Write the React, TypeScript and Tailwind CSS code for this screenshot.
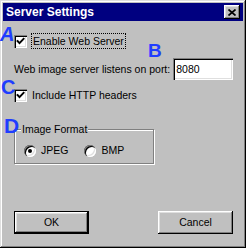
import React from 'react';

const raised = 'shadow-[inset_-1px_-1px_#000,inset_1px_1px_#fff,inset_-2px_-2px_#808080,inset_2px_2px_#dfdfdf]';
const sunken = 'shadow-[inset_1px_1px_#808080,inset_2px_2px_#000,inset_-1px_-1px_#fff,inset_-2px_-2px_#dfdfdf]';

function CheckBox({ checked }: { checked: boolean }) {
  return (
    <div className={`w-[13px] h-[13px] bg-white flex items-center justify-center shrink-0 ${sunken}`}>
      {checked && (
        <svg width="9" height="9" viewBox="0 0 9 9">
          <path d="M1.5 4 L3.5 6.2 L7.6 1.8" fill="none" stroke="#000" strokeWidth="1.9" strokeLinecap="square" />
        </svg>
      )}
    </div>
  );
}

function Radio({ checked, label }: { checked: boolean; label: string }) {
  return (
    <div className="flex items-center">
      <div className="w-[12px] h-[12px] rounded-full bg-white flex items-center justify-center shrink-0 shadow-[inset_1px_1px_#808080,inset_2px_2px_#000,inset_-1px_-1px_#fff,inset_-2px_-2px_#dfdfdf]">
        {checked && <div className="w-[4px] h-[4px] rounded-full bg-black" />}
      </div>
      <span className="ml-[5px]">{label}</span>
    </div>
  );
}

function Button({ label, isDefault }: { label: string; isDefault?: boolean }) {
  return (
    <button
      className={`w-[75px] h-[23px] bg-[#c0c0c0] flex items-center justify-center ${
        isDefault ? 'border border-black shadow-[inset_-1px_-1px_#000,inset_1px_1px_#fff,inset_-2px_-2px_#808080,inset_2px_2px_#dfdfdf]' : raised
      }`}
    >
      {label}
    </button>
  );
}

export default function App() {
  return (
    <div
      className="relative w-[246px] h-[248px] bg-[#c0c0c0] p-[3px] flex flex-col text-black text-[10.5px] leading-[13px] font-['Liberation_Sans',Arial,sans-serif] shadow-[inset_-1px_-1px_#000,inset_1px_1px_#dfdfdf,inset_-2px_-2px_#808080,inset_2px_2px_#fff]"
    >
      {/* title bar */}
      <div className="h-[18px] bg-[#000080] flex items-center justify-between pl-[3px] pr-[3px]">
        <span className="text-white font-bold text-[12px] leading-[14px]">Server Settings</span>
        <div className={`w-[16px] h-[14px] bg-[#c0c0c0] flex items-center justify-center ${raised}`}>
          <svg width="8" height="7" viewBox="0 0 8 7">
            <path d="M0.5 0.5 L7.5 6.5 M7.5 0.5 L0.5 6.5" stroke="#000" strokeWidth="1.7" />
          </svg>
        </div>
      </div>

      {/* client */}
      <div className="flex flex-col pl-[11px] pr-[10px] whitespace-nowrap">
        <div className="mt-[12px] h-[16px] flex items-center">
          <CheckBox checked />
          <span className="ml-[4px] h-[16px] px-[1px] flex items-center border border-dotted border-black">
            Enable Web Server
          </span>
        </div>

        <div className="mt-[9px] h-[22px] flex items-center">
          <span className="whitespace-nowrap">Web image server listens on port:</span>
          <input
            defaultValue="8080"
            className={`ml-[3px] shrink-0 w-[60px] h-[22px] bg-white pl-[3px] outline-none text-[10.5px] ${sunken}`}
          />
        </div>

        <div className="mt-[9px] h-[13px] flex items-center">
          <CheckBox checked />
          <span className="ml-[5px]">Include HTTP headers</span>
        </div>

        <div className="relative mt-[27px] w-[140px] h-[35px] border border-[#808080] shadow-[1px_1px_0_#fff,inset_1px_1px_0_#fff]">
          <span className="absolute -top-[7px] left-[6px] px-[1px] bg-[#c0c0c0] leading-[12px]">Image Format</span>
          <div className="flex items-center pt-[14px] pl-[9px] gap-[16px]">
            <Radio checked label="JPEG" />
            <Radio checked={false} label="BMP" />
          </div>
        </div>

        <div className="mt-[47px] flex justify-between">
          <Button label="OK" isDefault />
          <Button label="Cancel" />
        </div>
      </div>

      {/* blue annotation letters */}
      <span className="absolute left-[0px] top-[24px] text-[#1f3dff] font-bold italic text-[20px] leading-[20px]">A</span>
      <span className="absolute left-[148px] top-[41px] text-[#1f3dff] font-bold text-[19px] leading-[19px]">B</span>
      <span className="absolute left-[1px] top-[77px] text-[#1f3dff] font-bold text-[20px] leading-[20px]">C</span>
      <span className="absolute left-[4px] top-[115px] text-[#1f3dff] font-bold text-[21px] leading-[21px]">D</span>
    </div>
  );
}
